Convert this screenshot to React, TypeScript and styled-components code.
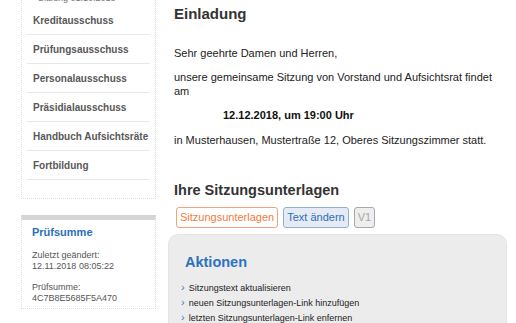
import React from 'react';
import styled, {createGlobalStyle} from 'styled-components';

const GlobalStyle = createGlobalStyle`
  html, body {
    margin: 0;
    padding: 0;
    background: #fff;
    overflow: hidden;
  }
  body {
    font-family: "Liberation Sans", Arial, Helvetica, sans-serif;
    color: #333;
  }
`;

const navItems = [
  'Kreditausschuss',
  'Prüfungsausschuss',
  'Personalausschuss',
  'Präsidialausschuss',
  'Handbuch Aufsichtsräte',
  'Fortbildung',
];

const actions = [
  'Sitzungstext aktualisieren',
  'neuen Sitzungsunterlagen-Link hinzufügen',
  'letzten Sitzungsunterlagen-Link enfernen',
];

const App = () => {
  return (
    <>
      <GlobalStyle/>
      <Page>
        <Sidebar>
          <NavBox>
            <SubItem>Sitzung 01.10.2018</SubItem>
            {navItems.map((item) => (
              <NavItem key={item}>{item}</NavItem>
            ))}
            <NavSpacer/>
          </NavBox>

          <InfoBox>
            <InfoTitle>Prüfsumme</InfoTitle>
            <InfoText>Zuletzt geändert:<br/>12.11.2018 08:05:22</InfoText>
            <InfoText>Prüfsumme:<br/>4C7B8E5685F5A470</InfoText>
          </InfoBox>
        </Sidebar>

        <Main>
          <Heading>Einladung</Heading>
          <Para>Sehr geehrte Damen und Herren,</Para>
          <Para>unsere gemeinsame Sitzung von Vorstand und Aufsichtsrat findet<br/>am</Para>
          <DateLine>12.12.2018, um 19:00 Uhr</DateLine>
          <Para>in Musterhausen, Mustertraße 12, Oberes Sitzungszimmer statt.</Para>

          <SubHeading>Ihre Sitzungsunterlagen</SubHeading>
          <TabRow>
            <Tab variant="orange">Sitzungsunterlagen</Tab>
            <Tab variant="blue">Text ändern</Tab>
            <Tab variant="gray">V1</Tab>
          </TabRow>

          <ActionBox>
            <ActionTitle>Aktionen</ActionTitle>
            <ActionList>
              {actions.map((a) => (
                <ActionItem key={a}>
                  <Chevron>›</Chevron>
                  {a}
                </ActionItem>
              ))}
            </ActionList>
          </ActionBox>
        </Main>
      </Page>
    </>
  )
}

export default App;

type TabVariant = 'orange' | 'blue' | 'gray';

const tabColors: Record<TabVariant, {border: string, bg: string, color: string}> = {
  orange: {border: '#f5a27c', bg: '#fff', color: '#f27b3d'},
  blue: {border: '#8fb1d6', bg: '#e4ebf4', color: '#2f6db3'},
  gray: {border: '#a8a8a8', bg: '#eeeeee', color: '#a5a5a5'},
};

const Page = styled.div`
  display: flex;
  align-items: flex-start;
  width: 516px;
  height: 323px;
  overflow: hidden;
`;
const Sidebar = styled.div`
  width: 135px;
  margin-left: 21px;
  margin-top: -7px;
  flex-shrink: 0;
`;
const NavBox = styled.div`
  border: 1px dotted #d8dde3;
  border-top: none;
  padding: 0 5px;
  background: #fff;
`;
const SubItem = styled.div`
  font-size: 9px;
  color: #777;
  padding-left: 11px;
  height: 13px;
  line-height: 10px;
`;
const NavItem = styled.div`
  height: 28px;
  line-height: 29px;
  padding-left: 6px;
  font-size: 10px;
  font-weight: bold;
  color: #585858;
  border-bottom: 1px solid #e6e9ec;
  white-space: nowrap;
`;
const NavSpacer = styled.div`
  height: 18px;
`;
const InfoBox = styled.div`
  margin-top: 16px;
  border: 1px dotted #d8dde3;
  border-top: 5px solid #d5d5d5;
  padding: 6px 10px 4px 10px;
`;
const InfoTitle = styled.div`
  font-size: 11px;
  line-height: 13px;
  font-weight: bold;
  color: #2a70b8;
  margin-bottom: 11px;
`;
const InfoText = styled.div`
  font-size: 9px;
  line-height: 11px;
  color: #555;
  margin-bottom: 10px;

  &:last-child {
    margin-bottom: 0;
  }
`;
const Main = styled.div`
  margin-left: 18px;
  width: 335px;
  flex-shrink: 0;
`;
const Heading = styled.h1`
  font-size: 15px;
  line-height: 18px;
  font-weight: bold;
  color: #333;
  margin: 5px 0 23px 0;
`;
const Para = styled.p`
  font-size: 11px;
  line-height: 14px;
  margin: 0 0 10px 0;
  color: #222;
`;
const DateLine = styled.p`
  font-size: 11px;
  font-weight: bold;
  line-height: 14px;
  margin: 1px 0 11px 49px;
  color: #111;
`;
const SubHeading = styled.h2`
  font-size: 14.5px;
  line-height: 18px;
  font-weight: bold;
  color: #333;
  margin: 34px 0 8px 0;
`;
const TabRow = styled.div`
  display: flex;
  gap: 5px;
  margin-left: 2px;
`;
const Tab = styled.span<{variant: TabVariant}>`
  display: inline-block;
  height: 19px;
  line-height: 19px;
  padding: 0 3px;
  border: 1px solid ${p => tabColors[p.variant].border};
  background: ${p => tabColors[p.variant].bg};
  color: ${p => tabColors[p.variant].color};
  border-radius: 3px;
  font-size: 11px;
`;
const ActionBox = styled.div`
  margin: 6px 0 0 -6px;
  width: 339px;
  height: 120px;
  background: #ececec;
  border: 1px dotted #dcdcdc;
  border-radius: 10px;
  padding: 19px 0 0 12px;
  box-sizing: border-box;
`;
const ActionTitle = styled.div`
  font-size: 14.5px;
  line-height: 17px;
  font-weight: bold;
  color: #2b73bf;
  margin: 0 0 10px 4px;
`;
const ActionList = styled.ul`
  list-style: none;
  margin: 0;
  padding: 0;
`;
const ActionItem = styled.li`
  font-size: 9px;
  line-height: 15px;
  height: 15px;
  color: #222;
`;
const Chevron = styled.span`
  color: #3a7cc4;
  font-size: 11px;
  line-height: 1;
  margin-right: 4px;
`;
